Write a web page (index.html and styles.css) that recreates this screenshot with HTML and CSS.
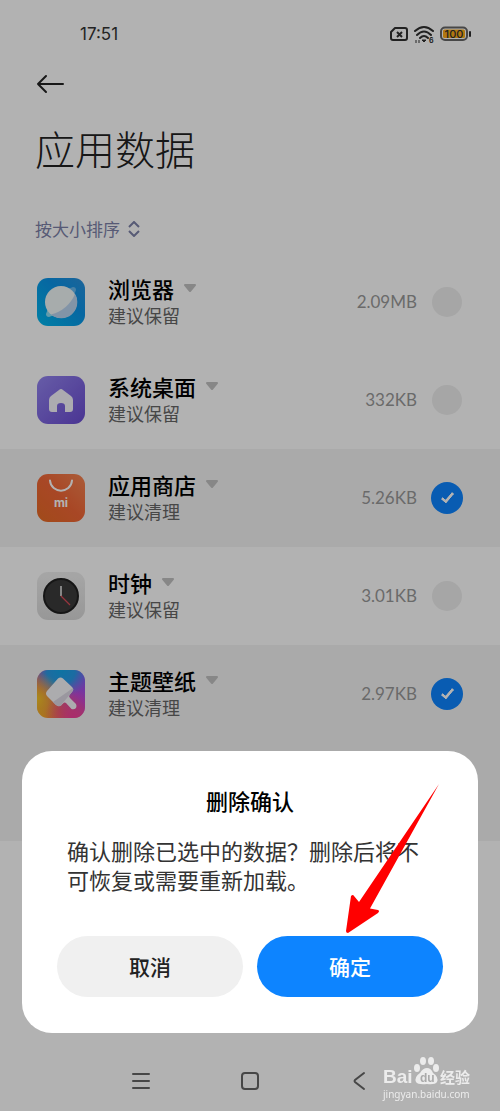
FILE: index.html
```html
<!DOCTYPE html>
<html lang="zh-CN">
<head>
    <meta charset="UTF-8">
    <meta name="viewport" content="width=device-width, initial-scale=1">
    <title>应用数据</title>
    <link rel="stylesheet" href="styles.css">
</head>
<body>
    <div class="screen">
        <header>
            <div class="status-bar">
                <span class="time">17:51</span>
                <svg class="status-icons" width="84" height="20" viewBox="0 0 84 20" fill="none" stroke="#303030" stroke-width="2">
                    <path d="M7 4H17Q19 4 19 6V14Q19 16 17 16H5Q3 16 3 14V8Z" stroke-linejoin="round"/>
                    <path d="M9 8L14 13M14 8L9 13"/>
                    <path d="M27 7Q36 -1 45 7M29 11Q36 4 43 11M32 14Q36 10 40 14" stroke-linecap="round"/>
                    <path d="M34 16L36 18L38 16Z" fill="#303030" stroke-width="1"/>
                    <path d="M28 16V19M31 16V19" stroke="#777" stroke-width="1.500"/>
                    <text x="41" y="19" class="wifi-text">6</text>
                    <rect x="53" y="3.500" width="26" height="12.500" rx="4" stroke="#666"/>
                    <rect x="55" y="5.500" width="22" height="8.500" rx="1.500" fill="#ffad18" stroke="none"/>
                    <path d="M82 8V12" stroke-linecap="round"/>
                    <text x="66" y="14" text-anchor="middle" class="battery-text">100</text>
                </svg>
            </div>
            <button class="back" aria-label="返回">
                <svg width="30" height="20" viewBox="0 0 30 20" fill="none" stroke="#222" stroke-width="2" stroke-linecap="round" stroke-linejoin="round"><path d="M28 10H3M11 2L3 10L11 18"/></svg>
            </button>
            <h1>应用数据</h1>
            <button class="sort">按大小排序
                <svg width="12" height="16" viewBox="0 0 12 16" fill="none" stroke="#7d82a8" stroke-width="2"><path d="M1 6L6 1L11 6M1 10L6 15L11 10"/></svg>
            </button>
        </header>

        <ul class="app-list">
            <li>
                <label class="app">
                    <svg class="app-icon" viewBox="0 0 48 48">
                        <defs>
                            <linearGradient id="blue" x1="0" y1="1" x2="1" y2="0"><stop offset="0" stop-color="#00b8ed"/><stop offset=".6" stop-color="#0a94e8"/><stop offset="1" stop-color="#2a90dc"/></linearGradient>
                        </defs>
                        <rect width="48" height="48" rx="11" fill="url(#blue)"/>
                        <path d="M28 12L36 9Q39 9 39 12L36 20Z" fill="#68b9ee"/>
                        <path d="M20 36L12 39Q9 39 9 36L12 28Z" fill="#8fdff5"/>
                        <circle cx="24" cy="24" r="16" fill="#f0f6f6"/>
                        <path d="M38 16A16 16 0 0 1 14 36.500Q31 32 38 16Z" fill="#bbd5f0"/>
                    </svg>
                    <span class="info">
                        <span class="name">浏览器<svg class="more" viewBox="0 0 14 9"><path d="M2 1H12L7 7Z"/></svg></span>
                        <span class="tip">建议保留</span>
                    </span>
                    <span class="size">2.09MB</span>
                    <input type="checkbox">
                </label>
            </li>
            <li>
                <label class="app">
                    <svg class="app-icon" viewBox="0 0 48 48">
                        <defs>
                            <linearGradient id="purple" x1="0" y1="0" x2="1" y2="1"><stop offset="0" stop-color="#9485f0"/><stop offset="1" stop-color="#6a4bd2"/></linearGradient>
                        </defs>
                        <rect width="48" height="48" rx="11" fill="url(#purple)"/>
                        <path d="M22 14Q24 12 26 14L34 20Q36 21.500 36 24V33Q36 36 33 36H28V30Q28 27 24 27Q20 27 20 30V36H15Q12 36 12 33V24Q12 21.500 14 20Z" fill="#f7f5fc"/>
                    </svg>
                    <span class="info">
                        <span class="name">系统桌面<svg class="more" viewBox="0 0 14 9"><path d="M2 1H12L7 7Z"/></svg></span>
                        <span class="tip">建议保留</span>
                    </span>
                    <span class="size">332KB</span>
                    <input type="checkbox">
                </label>
            </li>
            <li>
                <label class="app">
                    <svg class="app-icon" viewBox="0 0 48 48">
                        <defs>
                            <linearGradient id="orange" x1="0" y1="1" x2="1" y2="0"><stop offset="0" stop-color="#e76b25"/><stop offset=".5" stop-color="#f16636"/><stop offset="1" stop-color="#f58452"/></linearGradient>
                        </defs>
                        <rect width="48" height="48" rx="11" fill="url(#orange)"/>
                        <path d="M13 6.500C14 20 34 20 35 6.500" fill="none" stroke="#fff" stroke-width="2" stroke-linecap="round"/>
                        <text x="24" y="33" text-anchor="middle" class="mi-text">mi</text>
                    </svg>
                    <span class="info">
                        <span class="name">应用商店<svg class="more" viewBox="0 0 14 9"><path d="M2 1H12L7 7Z"/></svg></span>
                        <span class="tip">建议清理</span>
                    </span>
                    <span class="size">5.26KB</span>
                    <input type="checkbox" checked>
                </label>
            </li>
            <li>
                <label class="app">
                    <svg class="app-icon" viewBox="0 0 48 48">
                        <defs>
                            <linearGradient id="gray" x1="0" y1="0" x2="0" y2="1"><stop offset="0" stop-color="#eee"/><stop offset="1" stop-color="#d9d9d9"/></linearGradient>
                        </defs>
                        <rect width="48" height="48" rx="11" fill="url(#gray)"/>
                        <circle cx="24" cy="24" r="17" fill="#3b3b3b" stroke="#202020" stroke-width="2"/>
                        <path d="M24 14V24" stroke="#eee" stroke-width="1.500"/>
                        <path d="M24 24L33 33" stroke="#d94b58" stroke-width="1.200"/>
                    </svg>
                    <span class="info">
                        <span class="name">时钟<svg class="more" viewBox="0 0 14 9"><path d="M2 1H12L7 7Z"/></svg></span>
                        <span class="tip">建议保留</span>
                    </span>
                    <span class="size">3.01KB</span>
                    <input type="checkbox">
                </label>
            </li>
            <li>
                <label class="app">
                    <svg class="app-icon" viewBox="0 0 48 48">
                        <defs>
                            <linearGradient id="rainbow" x1="0" y1="1" x2="1" y2="0"><stop offset="0" stop-color="#ffae16"/><stop offset=".3" stop-color="#ef704b"/><stop offset=".65" stop-color="#b84ae0"/><stop offset="1" stop-color="#8356f5"/></linearGradient>
                            <radialGradient id="sky" cx=".5" cy="0" r=".6"><stop offset="0" stop-color="#14a6e9"/><stop offset=".5" stop-color="#1ca2e8" stop-opacity=".9"/><stop offset="1" stop-color="#4a90e8" stop-opacity="0"/></radialGradient>
                            <radialGradient id="yellow" cx="0" cy=".6" r=".55"><stop offset="0" stop-color="#f5c425"/><stop offset="1" stop-color="#e0bd40" stop-opacity="0"/></radialGradient>
                            <radialGradient id="pink" cx=".75" cy="1" r=".6"><stop offset="0" stop-color="#f43e9e"/><stop offset="1" stop-color="#f43e9e" stop-opacity="0"/></radialGradient>
                        </defs>
                        <rect width="48" height="48" rx="11" fill="url(#rainbow)"/>
                        <rect width="48" height="48" rx="11" fill="url(#sky)"/>
                        <rect width="48" height="48" rx="11" fill="url(#yellow)"/>
                        <rect width="48" height="48" rx="11" fill="url(#pink)"/>
                        <path d="M21 8.500Q23.500 6.500 26 8.500L35 17Q37.500 19.500 35 22L32.500 25Q31.500 26.500 33 28L39 34Q40 36 39 38Q37 40 34.500 39L29 33Q27.500 32 26 33.500L24 35.500Q21.500 37 19 35L10 26Q8 23.500 10 21Z" fill="#f7f7fa"/>
                        <path d="M36 18Q37 20 35 22L32.500 25L25 34L24 35.500Q21.500 37 19 35L16 32Z" fill="#ddd9e4"/>
                    </svg>
                    <span class="info">
                        <span class="name">主题壁纸<svg class="more" viewBox="0 0 14 9"><path d="M2 1H12L7 7Z"/></svg></span>
                        <span class="tip">建议清理</span>
                    </span>
                    <span class="size">2.97KB</span>
                    <input type="checkbox" checked>
                </label>
            </li>
            <li class="selected"></li>
        </ul>

        <nav class="nav-bar">
            <button aria-label="菜单"><svg width="24" height="24" viewBox="0 0 24 24"><path d="M4 5H20M4 12H20M4 19H20"/></svg></button>
            <button aria-label="主页"><svg width="24" height="24" viewBox="0 0 24 24"><rect x="4" y="4" width="16" height="16" rx="3"/></svg></button>
            <button aria-label="后退"><svg width="24" height="24" viewBox="0 0 24 24"><path d="M17 4L8 11Q7 12 8 13L17 20"/></svg></button>
        </nav>
    </div>

    <!-- 遮罩和弹窗 -->
    <div class="mask">
        <div class="dialog" role="dialog" aria-labelledby="dialogTitle">
            <h2 id="dialogTitle">删除确认</h2>
            <p>确认删除已选中的数据？删除后将不可恢复或需要重新加载。</p>
            <div class="actions">
                <button class="cancel">取消</button>
                <button class="confirm">确定</button>
            </div>
            <svg class="arrow" width="96" height="152" viewBox="0 0 96 152"><path d="M95 1L26 125.500L34 127Q36 128 34 130L4 150Q2 150 2 148L7 113Q9 111 10 113L15 119Z" fill="#f00"/></svg>
        </div>
    </div>

    <svg class="watermark" width="92" height="46" viewBox="0 0 92 46">
        <text x="1" y="28" class="logo-text">Bai</text>
        <g fill="#ececec">
            <ellipse cx="35" cy="13" rx="3" ry="4"/>
            <ellipse cx="41" cy="6" rx="3" ry="4"/>
            <ellipse cx="49" cy="6" rx="3" ry="4"/>
            <ellipse cx="54" cy="13" rx="3" ry="4"/>
            <path d="M45 13Q49 13 51 18Q57 22 55 27Q53 30 45 29Q36 30 34 27Q32 22 38 18Q41 13 45 13Z"/>
        </g>
        <text x="38" y="27" class="du-text">du</text>
        <text x="58" y="28" class="exp-text">经验</text>
        <text x="1" y="43" class="url-text">jingyan.baidu.com</text>
    </svg>
</body>
</html>
```
FILE: styles.css
```css
* {
    box-sizing: border-box;
}

body {
    margin: 0;
    background-color: #fff;
    color: #000;
    font-family: "Noto Sans CJK SC", sans-serif;
}

button {
    padding: 0;
    border: none;
    background: none;
    font-family: inherit;
    cursor: pointer;
}

h1, h2, p, ul {
    margin: 0;
    padding: 0;
}

.screen {
    display: flex;
    flex-direction: column;
    min-height: 100vh;
}

header {
    display: flex;
    flex-direction: column;
    align-items: flex-start;
    padding: 0 28px 12px 35px;
}

/* 状态栏 */
.status-bar {
    display: flex;
    justify-content: space-between;
    align-items: center;
    align-self: stretch;
    height: 68px;
    padding-left: 45px;
}

.time {
    color: #333;
    font-family: Inter, sans-serif;
    font-size: 17px;
}

.wifi-text, .battery-text {
    fill: #303030;
    stroke: none;
    font-family: Inter, sans-serif;
    font-size: 7px;
    font-weight: bold;
}

.battery-text {
    font-size: 11px;
    font-weight: 500;
}

.back {
    height: 32px;
}

.back svg {
    display: block;
}

h1 {
    margin: 20px 0 40px;
    font-size: 40px;
    font-weight: 300;
    line-height: 56px;
    color: #222;
}

.sort {
    display: flex;
    align-items: center;
    gap: 8px;
    color: #7d82a8;
    font-size: 17px;
    font-weight: 400;
    line-height: 25px;
}

/* 应用列表 */
.app-list {
    list-style: none;
}

.app-list li {
    height: 98px;
}

.app-list li.selected,
.app-list li:has(input:checked) {
    background-color: #f4f4f4;
}

.app {
    display: flex;
    align-items: center;
    height: 100%;
    padding: 0 37px 1px;
}

.app-icon {
    width: 48px;
    height: 48px;
    flex: none;
}

.mi-text {
    fill: #fff;
    font-family: Inter, sans-serif;
    font-size: 12px;
    font-weight: bold;
}

.info {
    flex: 1;
    display: flex;
    flex-direction: column;
    padding-left: 23px;
}

.name {
    display: flex;
    align-items: center;
    gap: 9px;
    font-size: 22px;
    font-weight: 500;
    line-height: 28px;
}

.more {
    width: 14px;
    height: 9px;
    fill: #c2c2c2;
    stroke: #c2c2c2;
    stroke-width: 2;
    stroke-linejoin: round;
}

.tip {
    color: #666;
    font-size: 18px;
    line-height: 27px;
}

.size {
    margin-right: 14px;
    color: #999;
    font-family: Lato, sans-serif;
    font-size: 17px;
}

input[type="checkbox"] {
    appearance: none;
    display: flex;
    align-items: center;
    justify-content: center;
    width: 30px;
    height: 30px;
    margin: 0 1px;
    border-radius: 50%;
    background-color: #eee;
}

input[type="checkbox"]:checked {
    width: 32px;
    height: 32px;
    margin: 0;
    background-color: #0d84ff;
}

input[type="checkbox"]:checked::after {
    content: "";
    width: 4px;
    height: 10px;
    margin-bottom: 3px;
    border: solid #fff;
    border-width: 0 3px 3px 0;
    border-radius: 1px;
    transform: rotate(40deg);
}

/* 底部导航 */
.nav-bar {
    display: flex;
    justify-content: space-around;
    margin-top: auto;
    padding: 18px 86px;
}

.nav-bar svg {
    display: block;
    fill: none;
    stroke: #666;
    stroke-width: 2;
    stroke-linecap: round;
}

/* 弹窗 */
.mask {
    position: fixed;
    inset: 0;
    display: flex;
    align-items: flex-end;
    padding: 0 22px 78px;
    background-color: rgba(0, 0, 0, 0.3);
}

.dialog {
    position: relative;
    flex: 1;
    padding: 34px 35px 36px;
    border-radius: 30px;
    background-color: #fff;
}

.dialog h2 {
    font-size: 22px;
    font-weight: 500;
    line-height: 30px;
    text-align: center;
}

.dialog p {
    margin: 21px 10px 42px;
    color: #333;
    font-size: 22px;
    line-height: 29px;
}

.actions {
    display: flex;
    gap: 14px;
}

.actions button {
    flex: 1;
    height: 61px;
    padding-bottom: 2px;
    border-radius: 31px;
    font-size: 21px;
    font-weight: 500;
}

.cancel {
    background-color: #f0f0f0;
    color: #222;
}

.confirm {
    background-color: #0d84ff;
    color: #fff;
}

.arrow {
    position: absolute;
    top: 32px;
    right: 38px;
    pointer-events: none;
}

/* 水印 */
.watermark {
    position: fixed;
    right: 26px;
    bottom: 10px;
    fill: #ececec;
}

.logo-text {
    font-family: "Liberation Sans", sans-serif;
    font-size: 19px;
    font-weight: bold;
}

.du-text {
    fill: #aaa;
    font-family: "Liberation Sans", sans-serif;
    font-size: 12px;
    font-weight: bold;
}

.exp-text {
    font-size: 15px;
    font-weight: bold;
}

.url-text {
    font-family: "Noto Sans", sans-serif;
    font-size: 10px;
}
```
